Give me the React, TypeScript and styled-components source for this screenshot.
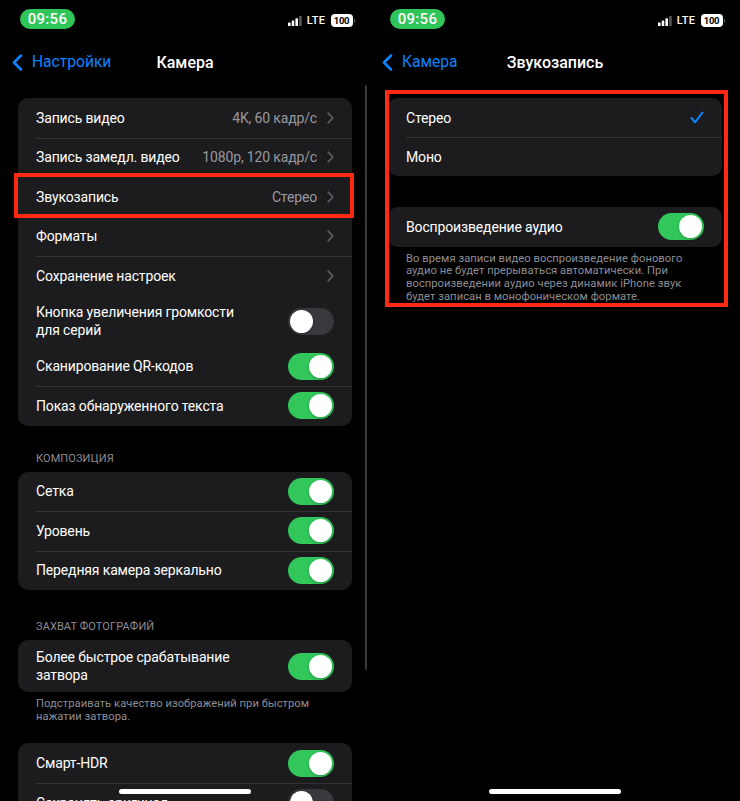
import React from "react";
import styled, { createGlobalStyle } from "styled-components";

const Global = createGlobalStyle`
  html, body { margin: 0; padding: 0; background: #000; }
  body { font-family: Roboto, "Noto Sans", "Liberation Sans", sans-serif; -webkit-font-smoothing: antialiased; }
  * { box-sizing: border-box; }
`;

const Screen = styled.div`
  display: flex;
  width: 740px;
  height: 801px;
  background: #000;
  overflow: hidden;
`;

const Panel = styled.section`
  position: relative;
  width: 370px;
  height: 801px;
  display: flex;
  flex-direction: column;
  overflow: hidden;
  color: #fff;
`;

const StatusBar = styled.div`
  height: 37px;
  flex-shrink: 0;
  display: flex;
  align-items: center;
  justify-content: space-between;
  padding: 0 15px 0 20px;
`;

const TimePill = styled.div`
  width: 55px;
  height: 20px;
  border-radius: 10px;
  background: #30c558;
  color: #fff;
  font-size: 15px;
  font-weight: 500;
  display: flex;
  align-items: center;
  justify-content: center;
  letter-spacing: 0.3px;
  margin-top: 1px;
`;

const StatusIcons = styled.div`
  display: flex;
  align-items: center;
  gap: 5px;
  margin-top: 4px;
`;

const Lte = styled.span`
  font-size: 11px;
  font-weight: 500;
  color: #fff;
  letter-spacing: 0.4px;
`;

const Battery = styled.div`
  display: flex;
  align-items: center;
  gap: 1px;
`;

const BatteryBody = styled.div`
  width: 22px;
  height: 13px;
  border-radius: 4px;
  background: #fff;
  color: #000;
  font-size: 9.5px;
  font-weight: 700;
  display: flex;
  align-items: center;
  justify-content: center;
  letter-spacing: -0.3px;
`;

const BatteryCap = styled.div`
  width: 1.5px;
  height: 4px;
  border-radius: 0 1px 1px 0;
  background: #4a7a4a;
`;

const NavBar = styled.div`
  height: 50px;
  flex-shrink: 0;
  display: grid;
  grid-template-columns: 1fr auto 1fr;
  align-items: center;
  padding: 0 12px;
`;

const BackLink = styled.div`
  display: flex;
  align-items: center;
  gap: 9px;
  color: #0a84ff;
  font-size: 15.6px;
  font-weight: 400;
`;

const NavTitle = styled.div`
  font-size: 16px;
  font-weight: 500;
  color: #fff;
`;

const Content = styled.div`
  padding: 11px 18px 0;
  display: flex;
  flex-direction: column;
`;

const Card = styled.div<{ $gap?: number }>`
  background: #1c1c1e;
  border-radius: 10px;
  margin-top: ${(p) => p.$gap ?? 0}px;
  display: flex;
  flex-direction: column;
`;

const Row = styled.div<{ $h?: number }>`
  position: relative;
  height: ${(p) => p.$h ?? 39.5}px;
  display: flex;
  align-items: center;
  justify-content: space-between;
  padding: 0 18px;
  gap: 12px;

  & + &::before {
    content: "";
    position: absolute;
    top: 0;
    left: 18px;
    right: 0;
    height: 1px;
    background: #333335;
  }
`;

const Label = styled.div`
  font-size: 14px;
  line-height: 18px;
  letter-spacing: -0.15px;
  color: #fff;
  white-space: nowrap;
`;

const Trailing = styled.div`
  display: flex;
  align-items: center;
  gap: 10px;
  flex-shrink: 0;
`;

const Value = styled.span`
  font-size: 14px;
  letter-spacing: -0.15px;
  color: #98989f;
`;

const Track = styled.div<{ $on: boolean }>`
  width: 46px;
  height: 27px;
  border-radius: 14px;
  padding: 2px;
  display: flex;
  justify-content: ${(p) => (p.$on ? "flex-end" : "flex-start")};
  background: ${(p) => (p.$on ? "#32c75a" : "#39393d")};
  flex-shrink: 0;
`;

const Knob = styled.div`
  width: 23px;
  height: 23px;
  border-radius: 50%;
  background: #fff;
  box-shadow: 0 1px 3px rgba(0, 0, 0, 0.25);
`;

const SectionHeader = styled.div<{ $gap: number }>`
  margin-top: ${(p) => p.$gap}px;
  padding: 0 18px 6px;
  font-size: 11px;
  line-height: 14px;
  color: #8d8d93;
  text-transform: uppercase;
  letter-spacing: 0.1px;
`;

const Footer = styled.div<{ $after?: number }>`
  padding: 6px 18px 0;
  margin-bottom: ${(p) => p.$after ?? 0}px;
  font-size: 11.2px;
  line-height: 12.7px;
  color: #8d8d93;
  letter-spacing: 0.05px;
`;

const Highlight = styled.div<{ $inset: string }>`
  position: relative;
  display: flex;
  flex-direction: column;
  &::after {
    content: "";
    position: absolute;
    inset: ${(p) => p.$inset};
    border: 4px solid #ff2a14;
    pointer-events: none;
  }
`;

const ScrollIndicator = styled.div`
  position: absolute;
  top: 85px;
  right: 3px;
  width: 2.5px;
  height: 585px;
  border-radius: 2px;
  background: #3a3a3c;
`;

const HomeIndicator = styled.div`
  position: absolute;
  left: 50%;
  bottom: 7px;
  width: 132px;
  height: 5px;
  margin-left: -66px;
  border-radius: 3px;
  background: #fff;
`;

const Toggle = ({ on }: { on: boolean }) => (
  <Track $on={on}>
    <Knob />
  </Track>
);

const Chevron = () => (
  <svg width="7" height="12" viewBox="0 0 7 12">
    <path d="M1.2 1.2 L5.8 6 L1.2 10.8" fill="none" stroke="#5c5c61" strokeWidth="1.8" strokeLinecap="round" strokeLinejoin="round" />
  </svg>
);

const BackChevron = () => (
  <svg width="11" height="17" viewBox="0 0 11 17">
    <path d="M9 1.5 L2 8.5 L9 15.5" fill="none" stroke="#0a84ff" strokeWidth="2.5" strokeLinecap="round" strokeLinejoin="round" />
  </svg>
);

const Check = () => (
  <svg width="14" height="13" viewBox="0 0 14 13">
    <path d="M1.5 7 L5 11.3 L12.5 1.5" fill="none" stroke="#0a84ff" strokeWidth="2" strokeLinecap="round" strokeLinejoin="round" />
  </svg>
);

const Signal = () => (
  <svg width="14" height="10" viewBox="0 0 14 10">
    <rect x="0" y="6.5" width="2.6" height="3.5" rx="0.6" fill="#fff" />
    <rect x="3.7" y="4.5" width="2.6" height="5.5" rx="0.6" fill="#fff" />
    <rect x="7.4" y="2.3" width="2.6" height="7.7" rx="0.6" fill="#fff" />
    <rect x="11.1" y="0" width="2.6" height="10" rx="0.6" fill="#5a5a5e" />
  </svg>
);

const Status = () => (
  <StatusBar>
    <TimePill>09:56</TimePill>
    <StatusIcons>
      <Signal />
      <Lte>LTE</Lte>
      <Battery>
        <BatteryBody>100</BatteryBody>
        <BatteryCap />
      </Battery>
    </StatusIcons>
  </StatusBar>
);

const Nav = ({ back, title }: { back: string; title: string }) => (
  <NavBar>
    <BackLink>
      <BackChevron />
      {back}
    </BackLink>
    <NavTitle>{title}</NavTitle>
    <div />
  </NavBar>
);

const LinkRow = ({ label, value }: { label: string; value?: string }) => (
  <Row>
    <Label>{label}</Label>
    <Trailing>
      {value && <Value>{value}</Value>}
      <Chevron />
    </Trailing>
  </Row>
);

const ToggleRow = ({ label, on, h }: { label: React.ReactNode; on: boolean; h?: number }) => (
  <Row $h={h}>
    <Label>{label}</Label>
    <Toggle on={on} />
  </Row>
);

export default function App() {
  return (
    <Screen>
      <Global />
      <Panel>
        <Status />
        <Nav back="Настройки" title="Камера" />
        <Content>
          <Card>
            <LinkRow label="Запись видео" value="4K, 60 кадр/с" />
            <LinkRow label="Запись замедл. видео" value="1080p, 120 кадр/с" />
            <Highlight $inset="-4px -2px -1px -4px">
              <LinkRow label="Звукозапись" value="Стерео" />
            </Highlight>
            <LinkRow label="Форматы" />
            <LinkRow label="Сохранение настроек" />
            <ToggleRow
              h={51}
              on={false}
              label={
                <>
                  Кнопка увеличения громкости
                  <br />
                  для серий
                </>
              }
            />
            <ToggleRow label="Сканирование QR-кодов" on />
            <ToggleRow label="Показ обнаруженного текста" on />
          </Card>

          <SectionHeader $gap={26}>Композиция</SectionHeader>
          <Card>
            <ToggleRow label="Сетка" on />
            <ToggleRow label="Уровень" on />
            <ToggleRow label="Передняя камера зеркально" on />
          </Card>

          <SectionHeader $gap={30}>Захват фотографий</SectionHeader>
          <Card>
            <ToggleRow
              h={52}
              on
              label={
                <>
                  Более быстрое срабатывание
                  <br />
                  затвора
                </>
              }
            />
          </Card>
          <Footer $after={20}>
            Подстраивать качество изображений при быстром
            <br />
            нажатии затвора.
          </Footer>

          <Card>
            <ToggleRow label="Смарт-HDR" on />
            <ToggleRow label="Сохранять оригинал" on={false} />
          </Card>
        </Content>
        <ScrollIndicator />
        <HomeIndicator />
      </Panel>

      <Panel>
        <Status />
        <Nav back="Камера" title="Звукозапись" />
        <Content>
          <Highlight $inset="-8px -6px -4px -3px">
            <Card>
              <Row $h={39}>
                <Label>Стерео</Label>
                <Check />
              </Row>
              <Row $h={39}>
                <Label>Моно</Label>
              </Row>
            </Card>
            <Card $gap={31}>
              <ToggleRow label="Воспроизведение аудио" on />
            </Card>
            <Footer>
              Во время записи видео воспроизведение фонового
              <br />
              аудио не будет прерываться автоматически. При
              <br />
              воспроизведении аудио через динамик iPhone звук
              <br />
              будет записан в монофоническом формате.
            </Footer>
          </Highlight>
        </Content>
        <HomeIndicator />
      </Panel>
    </Screen>
  );
}
